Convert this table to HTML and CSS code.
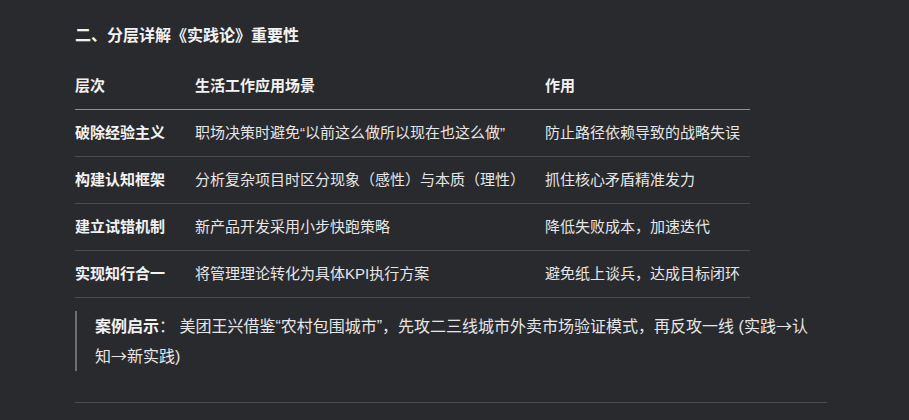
FILE: index.html
```html
<!DOCTYPE html>
<html lang="zh-CN">
<head>
<meta charset="utf-8">
<link rel="stylesheet" href="styles.css">
</head>
<body>
<main class="doc">
  <h3 class="title">二、分层详解《实践论》重要性</h3>
  <table class="grid">
    <colgroup>
      <col class="c1"><col class="c2"><col class="c3">
    </colgroup>
    <thead>
      <tr><th>层次</th><th>生活工作应用场景</th><th>作用</th></tr>
    </thead>
    <tbody>
      <tr><td class="key">破除经验主义</td><td>职场决策时避免“以前这么做所以现在也这么做”</td><td>防止路径依赖导致的战略失误</td></tr>
      <tr><td class="key">构建认知框架</td><td>分析复杂项目时区分现象（感性）与本质（理性）</td><td>抓住核心矛盾精准发力</td></tr>
      <tr><td class="key">建立试错机制</td><td>新产品开发采用小步快跑策略</td><td>降低失败成本，加速迭代</td></tr>
      <tr><td class="key">实现知行合一</td><td>将管理理论转化为具体KPI执行方案</td><td>避免纸上谈兵，达成目标闭环</td></tr>
    </tbody>
  </table>
  <blockquote class="note">
    <p><strong>案例启示</strong>： 美团王兴借鉴“农村包围城市”，先攻二三线城市外卖市场验证模式，再反攻一线 (实践<span class="cjk">→</span>认知<span class="cjk">→</span>新实践)</p>
  </blockquote>
  <hr class="rule">
</main>
</body>
</html>
```

FILE: styles.css
```css
html, body {
  margin: 0;
  padding: 0;
  background: #292a2e;
}
body {
  font-family: "Liberation Sans", "Noto Sans CJK SC", sans-serif;
  color: #e6e6e6;
  font-size: 15px;
}
.doc {
  width: 752px;
  padding: 24px 0 0 75px;
}
.title {
  margin: 0;
  font-size: 16px;
  line-height: 24px;
  font-weight: 700;
  color: #f2f2f2;
}
.grid {
  margin-top: 15px;
  border-collapse: collapse;
  table-layout: fixed;
  width: 675px;
}
.c1 { width: 120px; }
.c2 { width: 350px; }
.c3 { width: 205px; }
.grid th {
  text-align: left;
  font-weight: 700;
  color: #f2f2f2;
  padding: 12px 0;
  line-height: 22px;
  border-bottom: 1px solid #8e8f93;
}
.grid td {
  padding: 12px 0;
  line-height: 22px;
  border-bottom: 1px solid #4a4b50;
  white-space: nowrap;
}
.grid td.key {
  font-weight: 700;
  color: #f2f2f2;
}
.note {
  margin: 13px 0 0 0;
  padding: 0 12px 0 18px;
  border-left: 2px solid #6e6f73;
  font-size: 16px;
}
.note p {
  margin: 0;
  line-height: 29px;
}
.note strong {
  color: #f2f2f2;
  font-weight: 700;
}
.cjk {
  font-family: "Noto Sans CJK SC", sans-serif;
}
.rule {
  margin: 31px 0 0 0;
  border: 0;
  border-top: 1px solid #4a4b50;
  height: 0;
}
```
